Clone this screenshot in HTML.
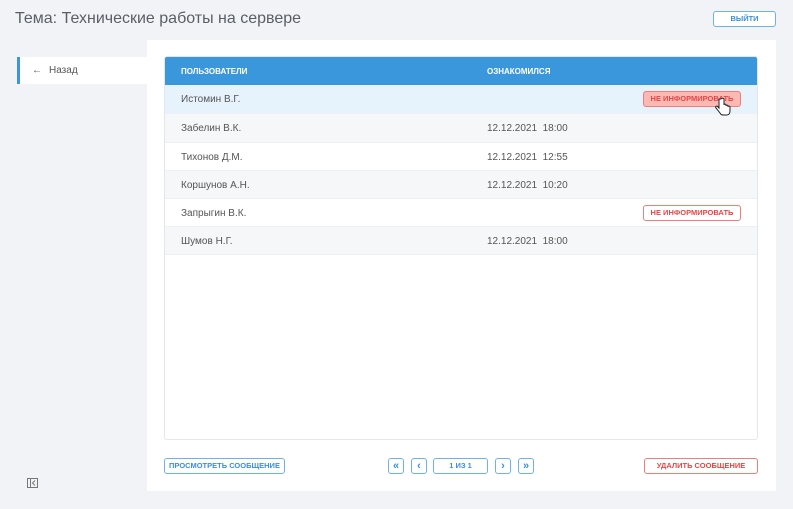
<!DOCTYPE html>
<html><head><meta charset="utf-8"><style>
*{box-sizing:border-box;margin:0;padding:0}
body{width:793px;height:509px;background:#f1f3f6;font-family:"Liberation Sans",sans-serif;position:relative;overflow:hidden;color:#555}
.abs{position:absolute}
.title{left:15px;top:10px;font-size:16px;color:#5a5f66}
.btn{position:absolute;border:1px solid #6fb2ea;border-radius:3px;background:#fff;color:#3a8fd8;font-size:7.5px;font-weight:bold;display:flex;align-items:center;justify-content:center;white-space:nowrap;line-height:1}
.red{border-color:#f07c7c;color:#e84545}
.panel{left:147px;top:40px;width:629px;height:451px;background:#fff}
.nav{left:17px;top:57px;width:130px;height:27px;background:#fff;border-left:3px solid #3a97dc;font-size:10px;color:#555;padding-left:12px;display:flex;align-items:center;line-height:1}
.table{left:164px;top:56px;width:594px;height:384px;border:1px solid #e3e7ec;border-radius:3px;background:#fff;overflow:hidden}
.head{height:28px;background:#3a97dc;color:#fff;font-size:8px;font-weight:bold;position:relative}
.row{height:28.3px;position:relative;font-size:10px;color:#555;border-top:1px solid #eef0f3}
.c1{position:absolute;left:16px;top:9px}
.c2{position:absolute;left:322px;top:9px}
.g{background:#f6f7f9}
</style></head><body>
<div class="abs title">Тема: Технические работы на сервере</div>
<div class="btn" style="left:713px;top:11px;width:63px;height:16px">ВЫЙТИ</div>
<div class="abs panel"></div>
<div class="abs nav"><span style="margin-right:7px;font-size:10px">&#8592;</span><span>Назад</span></div>
<div class="abs table">
<div class="head"><span class="c1" style="top:10px">ПОЛЬЗОВАТЕЛИ</span><span class="c2" style="top:10px">ОЗНАКОМИЛСЯ</span></div>
<div class="row" style="background:#e6f3fd;border-top:none"><span class="c1">Истомин В.Г.</span><div class="btn red" style="left:478px;top:6px;width:98px;height:16px;background:#fcb9b4">НЕ ИНФОРМИРОВАТЬ</div></div>
<div class="row g"><span class="c1">Забелин В.К.</span><span class="c2">12.12.2021&nbsp;&nbsp;18:00</span></div>
<div class="row"><span class="c1">Тихонов Д.М.</span><span class="c2">12.12.2021&nbsp;&nbsp;12:55</span></div>
<div class="row g"><span class="c1">Коршунов А.Н.</span><span class="c2">12.12.2021&nbsp;&nbsp;10:20</span></div>
<div class="row"><span class="c1">Запрыгин В.К.</span><div class="btn red" style="left:478px;top:6px;width:98px;height:16px">НЕ ИНФОРМИРОВАТЬ</div></div>
<div class="row g" style="border-bottom:1px solid #eef0f3"><span class="c1">Шумов Н.Г.</span><span class="c2">12.12.2021&nbsp;&nbsp;18:00</span></div>
</div>
<svg class="abs" style="left:715px;top:97px" width="18" height="20" viewBox="0 0 18 20"><path d="M4 2v9l-2-2c-1 0-2 1-1 2l4 5c1 2 2 2 4 2h3c2 0 3-2 3-4v-4c0-1-1-1-2-1v1-1c0-1-1-1-2-1v1-1c0-1-1-1-2-1v1V2c0-1-3-1-3 0z" fill="#fff" stroke="#222" stroke-width="1"/></svg>
<div class="btn" style="left:164px;top:458px;width:121px;height:16px">ПРОСМОТРЕТЬ СООБЩЕНИЕ</div>
<div class="btn" style="left:388px;top:458px;width:16px;height:16px;font-size:11px">«</div>
<div class="btn" style="left:411px;top:458px;width:16px;height:16px;font-size:11px">‹</div>
<div class="btn" style="left:433px;top:458px;width:55px;height:16px">1 ИЗ 1</div>
<div class="btn" style="left:495px;top:458px;width:16px;height:16px;font-size:11px">›</div>
<div class="btn" style="left:518px;top:458px;width:16px;height:16px;font-size:11px">»</div>
<div class="btn red" style="left:644px;top:458px;width:114px;height:16px">УДАЛИТЬ СООБЩЕНИЕ</div>
<svg class="abs" style="left:27px;top:478px" width="11" height="10" viewBox="0 0 11 10"><rect x="0.5" y="0.5" width="10" height="9" fill="none" stroke="#777"/><path d="M3.5 1v8M8 2.5L5.5 5 8 7.5" stroke="#777" fill="none"/></svg>
</body></html>
